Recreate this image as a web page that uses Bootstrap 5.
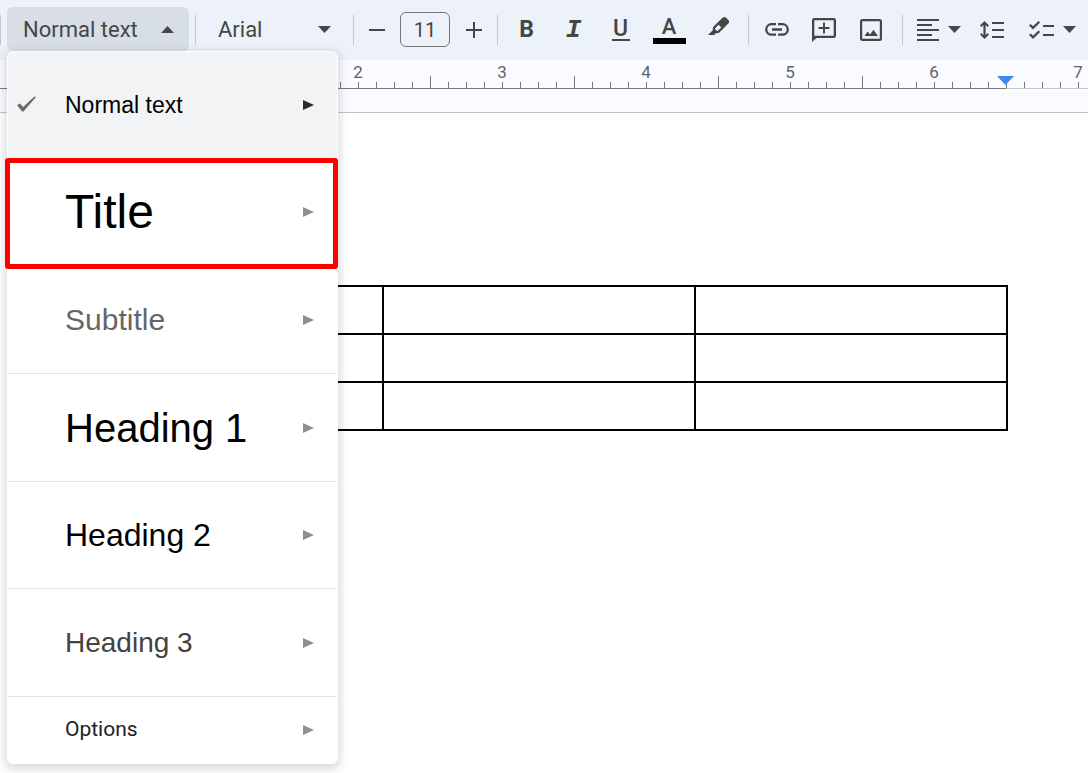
<!DOCTYPE html>
<html lang="en">
<head>
<meta charset="utf-8">
<meta name="viewport" content="width=device-width, initial-scale=1">
<title>Document editor</title>
<link href="https://cdn.jsdelivr.net/npm/bootstrap@5.3.0/dist/css/bootstrap.min.css" rel="stylesheet">
<style>
  :root { --ink: #444746; --line: #c7c7c7; --ui: Roboto, "Liberation Sans", sans-serif; --doc: "Liberation Sans", Arial, sans-serif; }
  body { background: #fff; font-family: var(--ui); }
  svg { display: block; flex: none; }

  .toolbar { background: #edf1fa; height: 60px; padding: 7px 8px 8px 0; color: var(--ink); }
  .rule-v { width: 1px; height: 30px; background: var(--line); flex: none; }
  .tool { width: 47px; height: 44px; padding: 0; border: 0; background: none; color: var(--ink); display: flex; align-items: center; justify-content: center; flex: none; }
  .tool-step { width: 46px; }
  .tool-wide { width: 50px; }
  .tool-caret { width: auto; padding-left: 14px; gap: 9px; }
  .style-box { position: relative; margin: 0 6px; }
  .style-btn { width: 182px; padding: 1px 15px 0 16px; border-radius: 6px; background: #d8dee6; justify-content: space-between; font-size: 22px; }
  .font-box { width: 157px; }
  .font-box select { width: 100%; height: 44px; padding: 0 22px; border: 0; background: none; appearance: none; color: var(--ink); font-size: 22px; }
  .font-box svg { position: absolute; right: 22px; top: 18px; pointer-events: none; }
  .size-box { width: 50px; height: 35px; padding: 0; border: 1px solid #747775; border-radius: 6px; background: none; color: var(--ink); text-align: center; font-size: 20px; flex: none; }
  .format-group { padding: 0 4px 0 5px; }
  .glyph { font-size: 23px; line-height: 24px; font-weight: 700; }
  .glyph-i { font: italic 700 26px/24px "Liberation Mono", monospace; }
  .glyph-u { font-size: 23px; line-height: 21px; font-weight: 500; border-bottom: 2px solid; width: 18px; }
  .glyph-a { font-size: 22px; line-height: 22px; font-weight: 500; border-bottom: 6px solid #000; width: 33px; }

  .ruler { height: 53px; background: #fafbfe; border-bottom: 1px solid #c4c4c4; }
  .ruler-track { margin-left: -2px; overflow: hidden; }
  .inch { position: relative; flex: none; width: 144px; height: 29px; border-bottom: 1px solid #747775; text-align: center; color: #5f6368; font-size: 17px; line-height: 25px; }
  .inch svg { position: absolute; left: 0; bottom: 0; fill: #747775; }
  .inch-off { border-color: #c4c4c4; }
  .inch svg.indent { bottom: 3px; left: -9px; fill: #4285f4; }

  .sheet { padding: 172px 80px 0 70px; }
  .grid-table { width: 100%; border-collapse: collapse; table-layout: fixed; }
  .grid-table td { height: 48px; border: 2px solid #000; }

  .style-menu { position: absolute; z-index: 10; top: 44px; left: 0; width: 331px; border: 1px solid #fff; border-radius: 6px; background: #fff; box-shadow: 0 3px 10px 2px rgba(60,64,67,.2); }
  .style-row { position: relative; width: 100%; height: 108px; padding: 0 23px 0 57px; border: 0; border-top: 1px solid #e3e3e3; background: none; color: #000; display: flex; align-items: center; justify-content: space-between; font-family: var(--doc); text-align: left; }
  .style-row > svg { fill: #8f8f8f; }
  .row-current { height: 106px; border: 0; border-radius: 5px 5px 0 0; background: #f1f3f4; font-size: 23px; }
  .row-current > svg { fill: #2b2b2b; }
  .row-current .tick { position: absolute; left: 8px; top: 43px; fill: #6b6b6b; }
  .row-title { height: 107px; font-size: 48px; }
  .row-title::after { content: ""; position: absolute; inset: -1px -1px -4px -3px; border: 5px solid #f00; border-radius: 3px; z-index: 1; }
  .row-sub { font-size: 30px; color: #666; }
  .row-h1 { font-size: 40px; }
  .row-h2 { height: 107px; font-size: 32px; }
  .row-h3 { font-size: 28px; color: #434343; }
  .row-options { height: 67px; font-family: var(--ui); font-size: 21px; color: #202124; }
</style>
</head>
<body class="min-vh-100">
<svg class="d-none" aria-hidden="true">
  <symbol id="down" viewBox="0 0 13 7"><path d="M0 0h13L6.500 7z"/></symbol>
  <symbol id="right" viewBox="0 0 11 10"><path d="M0 0l11 5L0 10z"/></symbol>
  <symbol id="ticks" viewBox="0 0 144 12"><path d="M0 0h1v12H0zM18 6h1v6h-1zM36 6h1v6h-1zM54 6h1v6h-1zM72 6h1v6h-1zM90 6h1v6h-1zM108 6h1v6h-1zM126 6h1v6h-1z"/></symbol>
</svg>

<header class="toolbar d-flex align-items-center" role="toolbar" aria-label="Formatting">
  <div class="rule-v"></div>
  <div class="style-box align-self-start">
    <button class="tool style-btn" type="button" aria-expanded="true">Normal text
      <svg width="13" height="7" fill="currentColor"><path d="M0 7h13L6.500 0z"/></svg>
    </button>
    <div class="style-menu" role="menu">
      <button class="style-row row-current" type="button" role="menuitem">
        <svg class="tick" width="21" height="18" viewBox="0 0 21 18"><path d="M1 10l3-1.500 3 3.500L18.500 1.500l1.500.5L7.500 16.500H6z"/></svg>
        Normal text<svg width="11" height="10"><use href="#right"/></svg></button>
      <button class="style-row row-title" type="button" role="menuitem">Title<svg width="11" height="10"><use href="#right"/></svg></button>
      <button class="style-row row-sub" type="button" role="menuitem">Subtitle<svg width="11" height="10"><use href="#right"/></svg></button>
      <button class="style-row row-h1" type="button" role="menuitem">Heading 1<svg width="11" height="10"><use href="#right"/></svg></button>
      <button class="style-row row-h2" type="button" role="menuitem">Heading 2<svg width="11" height="10"><use href="#right"/></svg></button>
      <button class="style-row row-h3" type="button" role="menuitem">Heading 3<svg width="11" height="10"><use href="#right"/></svg></button>
      <button class="style-row row-options" type="button" role="menuitem">Options<svg width="11" height="10"><use href="#right"/></svg></button>
    </div>
  </div>
  <div class="rule-v"></div>
  <div class="font-box position-relative flex-shrink-0">
    <select aria-label="Font"><option>Arial</option></select>
    <svg width="13" height="7" fill="currentColor"><use href="#down"/></svg>
  </div>
  <div class="rule-v"></div>
  <button class="tool tool-step" type="button" aria-label="Decrease font size"><svg width="16" height="16" fill="currentColor"><path d="M0 7h16v2H0z"/></svg></button>
  <input class="size-box" type="text" value="11" aria-label="Font size">
  <button class="tool" type="button" aria-label="Increase font size"><svg width="16" height="16" fill="currentColor"><path d="M7 0h2v7h7v2H9v7H7V9H0V7h7z"/></svg></button>
  <div class="rule-v"></div>
  <div class="format-group d-flex">
    <button class="tool" type="button" aria-label="Bold"><span class="glyph">B</span></button>
    <button class="tool" type="button" aria-label="Italic"><span class="glyph-i">I</span></button>
    <button class="tool" type="button" aria-label="Underline"><span class="glyph-u">U</span></button>
    <button class="tool tool-wide" type="button" aria-label="Text color"><span class="glyph-a">A</span></button>
    <button class="tool tool-wide" type="button" aria-label="Highlight color">
      <svg width="22" height="28" viewBox="0 0 22 28" fill="currentColor"><path fill-rule="evenodd" d="M0 19l5-5c-.6-1.300-.2-2.700.8-3.700L14.500 1.700c1-1 2.500-1 3.500 0l2.300 2.300c1 1 1 2.500 0 3.500l-8.600 8.700c-1 1-2.400 1.400-3.700.8l-1.800 2zM7.400 11.900c-.5.500-.5 1 0 1.500l1.200 1.200c.5.500 1 .5 1.500 0l3.200-3.200-2.700-2.700z"/></svg>
    </button>
  </div>
  <div class="rule-v"></div>
  <button class="tool ms-1" type="button" aria-label="Insert link">
    <svg width="24" height="13" viewBox="0 0 24 13" fill="none" stroke="currentColor" stroke-width="2.300"><path d="M11 1.200H6.500a5.200 5.200 0 0 0 0 10.500H11M13 1.200h4.500a5.200 5.200 0 0 1 0 10.500H13M7 6.500h10"/></svg>
  </button>
  <button class="tool" type="button" aria-label="Add comment">
    <svg width="24" height="24" viewBox="0 0 24 24" fill="currentColor"><path fill-rule="evenodd" d="M2.200 0h19.600A2.200 2.200 0 0 1 24 2.200v15.600a2.200 2.200 0 0 1-2.200 2.200H4.500L0 24V2.200A2.200 2.200 0 0 1 2.200 0zM2.300 2.300v15.400h19.400V2.300z"/><path d="M11 4.500h2V9h4.500v2H13v4.500h-2V11H6.500V9H11z"/></svg>
  </button>
  <button class="tool me-2" type="button" aria-label="Insert image">
    <svg width="22" height="22" viewBox="0 0 22 22" fill="currentColor"><path fill-rule="evenodd" d="M2.500 0h17A2.500 2.500 0 0 1 22 2.500v17a2.500 2.500 0 0 1-2.500 2.500h-17A2.500 2.500 0 0 1 0 19.500v-17A2.500 2.500 0 0 1 2.500 0zM2.200 2.200v17.600h17.600V2.200z"/><path d="M4.500 17l3.200-4.500L10 15.500l3.500-4.700L18 17z"/></svg>
  </button>
  <div class="rule-v"></div>
  <button class="tool tool-caret" type="button" aria-label="Align">
    <svg width="22" height="22" fill="currentColor"><path d="M0 0h22v2H0zM0 5h15v2H0zM0 10h22v2H0zM0 15h15v2H0zM0 20h22v2H0z"/></svg>
    <svg width="13" height="7" fill="currentColor"><use href="#down"/></svg>
  </button>
  <button class="tool tool-step ms-2" type="button" aria-label="Line spacing">
    <svg width="24" height="18" viewBox="0 0 24 18" fill="currentColor"><path d="M4.500 0L9 4.500 7.600 5.900 5.600 4v10l2-1.900L9 13.500 4.500 18 0 13.500l1.400-1.400 2 1.900V4l-2 1.900L0 4.500zM12 1h12v2H12zM12 8h12v2H12zM12 15h12v2H12z"/></svg>
  </button>
  <button class="tool tool-caret" type="button" aria-label="Checklist">
    <svg width="25" height="18" viewBox="0 0 25 18" fill="none" stroke="currentColor" stroke-width="2.200"><path d="M.8 3.700l3.200 3.200L10.300.8M.8 13.200l3.200 3.200 6.300-6.200M14 5h11M14 14h11"/></svg>
    <svg width="13" height="7" fill="currentColor"><use href="#down"/></svg>
  </button>
</header>

<div class="ruler">
  <div class="ruler-track d-flex">
    <div class="inch"></div>
    <div class="inch">1<svg width="144" height="12"><use href="#ticks"/></svg></div>
    <div class="inch">2<svg width="144" height="12"><use href="#ticks"/></svg></div>
    <div class="inch">3<svg width="144" height="12"><use href="#ticks"/></svg></div>
    <div class="inch">4<svg width="144" height="12"><use href="#ticks"/></svg></div>
    <div class="inch">5<svg width="144" height="12"><use href="#ticks"/></svg></div>
    <div class="inch">6<svg width="144" height="12"><use href="#ticks"/></svg></div>
    <div class="inch inch-off">7<svg width="144" height="12"><use href="#ticks"/></svg><svg class="indent" width="17" height="9"><path d="M0 0h17L8.500 9z"/></svg></div>
  </div>
</div>

<main class="sheet">
  <table class="grid-table" aria-label="Document table">
    <tbody>
      <tr><td></td><td></td><td></td></tr>
      <tr><td></td><td></td><td></td></tr>
      <tr><td></td><td></td><td></td></tr>
    </tbody>
  </table>
</main>
<script src="https://cdn.jsdelivr.net/npm/bootstrap@5.3.0/dist/js/bootstrap.bundle.min.js"></script>
</body>
</html>
